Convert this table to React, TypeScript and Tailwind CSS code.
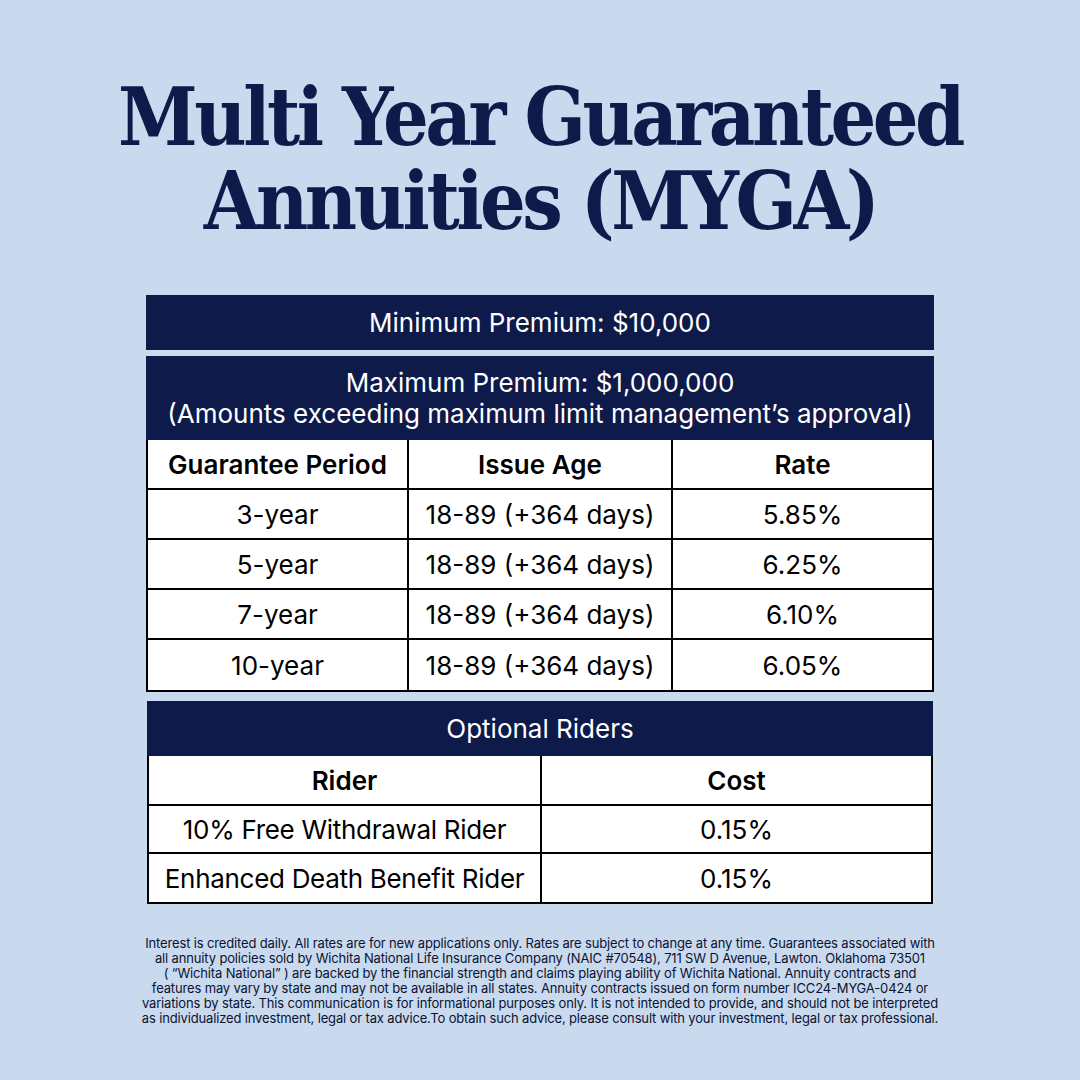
import React from "react";

const RATES = [
  { period: "3-year", age: "18-89 (+364 days)", rate: "5.85%" },
  { period: "5-year", age: "18-89 (+364 days)", rate: "6.25%" },
  { period: "7-year", age: "18-89 (+364 days)", rate: "6.10%" },
  { period: "10-year", age: "18-89 (+364 days)", rate: "6.05%" },
];

const RIDERS = [
  { name: "10% Free Withdrawal Rider", cost: "0.15%" },
  { name: "Enhanced Death Benefit Rider", cost: "0.15%" },
];

const DISCLAIMER = [
  "Interest is credited daily. All rates are for new applications only. Rates are subject to change at any time. Guarantees associated with",
  "all annuity policies sold by Wichita National Life Insurance Company (NAIC #70548), 711 SW D Avenue, Lawton. Oklahoma 73501",
  "( \u201cWichita National\u201d ) are backed by the financial strength and claims playing ability of Wichita National. Annuity contracts and",
  "features may vary by state and may not be available in all states. Annuity contracts issued on form number ICC24-MYGA-0424 or",
  "variations by state. This communication is for informational purposes only. It is not intended to provide, and should not be interpreted",
  "as individualized investment, legal or tax advice.To obtain such advice, please consult with your investment, legal or tax professional.",
];

export default function App() {
  return (
    <div className="w-[1080px] h-[1080px] bg-[#c9daef] flex flex-col items-center font-['Inter',sans-serif]">
      {/* Title */}
      <h1 className="mt-[75px] h-[168px] flex flex-col items-center text-center text-[#0e1a4a] font-['DejaVu_Serif_Condensed','DejaVu_Serif',serif] font-bold text-[80px] leading-[84px] tracking-[-3.5px]">
        <span>Multi Year Guaranteed</span>
        <span>Annuities (MYGA)</span>
      </h1>

      {/* Premium + rate table */}
      <div className="mt-[52px] w-[788px] flex flex-col text-[26px]">
        <div className="h-[55px] bg-[#0e1a4a] flex items-center justify-center text-white">
          Minimum Premium: $10,000
        </div>
        <div className="mt-[6px] h-[84px] bg-[#0e1a4a] flex flex-col items-center justify-center text-white leading-[31px]">
          <span>Maximum Premium: $1,000,000</span>
          <span>(Amounts exceeding maximum limit management’s approval)</span>
        </div>
        <div className="bg-white border-x-2 border-b-2 border-black grid grid-cols-[261px_264px_1fr] text-black">
          <div className="h-[50px] flex items-center justify-center font-semibold border-r-2 border-b-2 border-black">
            Guarantee Period
          </div>
          <div className="h-[50px] flex items-center justify-center font-semibold border-r-2 border-b-2 border-black">
            Issue Age
          </div>
          <div className="h-[50px] flex items-center justify-center font-semibold border-b-2 border-black">
            Rate
          </div>
          {RATES.map((r, i) => {
            const last = i === RATES.length - 1;
            return (
              <React.Fragment key={r.period}>
                <div className={`h-[50px] flex items-center justify-center border-r-2 border-black ${last ? "" : "border-b-2"}`}>
                  {r.period}
                </div>
                <div className={`h-[50px] flex items-center justify-center border-r-2 border-black ${last ? "" : "border-b-2"}`}>
                  {r.age}
                </div>
                <div className={`h-[50px] flex items-center justify-center border-black ${last ? "" : "border-b-2"}`}>
                  {r.rate}
                </div>
              </React.Fragment>
            );
          })}
        </div>
      </div>

      {/* Optional riders */}
      <div className="mt-[9px] w-[786px] flex flex-col text-[26px]">
        <div className="h-[55px] bg-[#0e1a4a] flex items-center justify-center text-white">
          Optional Riders
        </div>
        <div className="bg-white border-x-2 border-b-2 border-black grid grid-cols-[393px_1fr] text-black">
          <div className="h-[50px] flex items-center justify-center font-semibold border-r-2 border-b-2 border-black">
            Rider
          </div>
          <div className="h-[50px] flex items-center justify-center font-semibold border-b-2 border-black">
            Cost
          </div>
          {RIDERS.map((r, i) => {
            const last = i === RIDERS.length - 1;
            return (
              <React.Fragment key={r.name}>
                <div className={`h-[48px] flex items-center justify-center tracking-[-0.3px] border-r-2 border-black ${last ? "" : "border-b-2"}`}>
                  {r.name}
                </div>
                <div className={`h-[48px] flex items-center justify-center border-black ${last ? "" : "border-b-2"}`}>
                  {r.cost}
                </div>
              </React.Fragment>
            );
          })}
        </div>
      </div>

      {/* Disclaimer */}
      <p className="mt-[32px] text-center text-[#0b1230] text-[13px] leading-[15px] tracking-[-0.15px]">
        {DISCLAIMER.map((line) => (
          <React.Fragment key={line}>
            {line}
            <br />
          </React.Fragment>
        ))}
      </p>
    </div>
  );
}
